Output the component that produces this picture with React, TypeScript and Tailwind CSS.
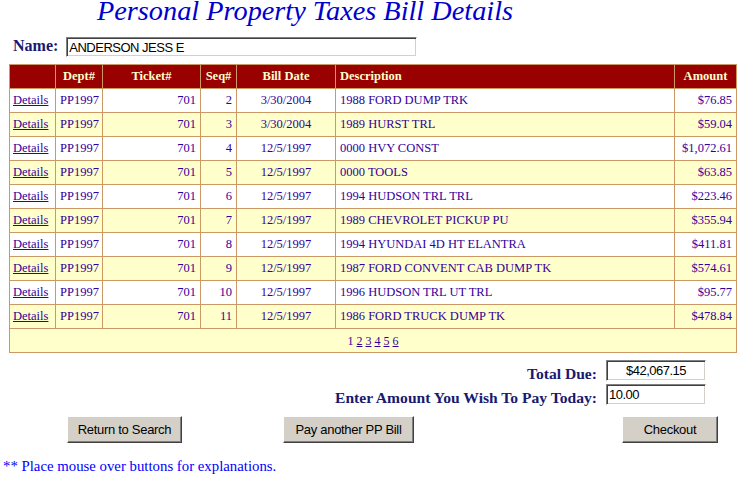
import React from 'react';

interface Bill {
    seq: number;
    date: string;
    description: string;
    amount: string;
}

const BILLS: Bill[] = [
    { seq: 2, date: '3/30/2004', description: '1988 FORD DUMP TRK', amount: '$76.85' },
    { seq: 3, date: '3/30/2004', description: '1989 HURST TRL', amount: '$59.04' },
    { seq: 4, date: '12/5/1997', description: '0000 HVY CONST', amount: '$1,072.61' },
    { seq: 5, date: '12/5/1997', description: '0000 TOOLS', amount: '$63.85' },
    { seq: 6, date: '12/5/1997', description: '1994 HUDSON TRL TRL', amount: '$223.46' },
    { seq: 7, date: '12/5/1997', description: '1989 CHEVROLET PICKUP PU', amount: '$355.94' },
    { seq: 8, date: '12/5/1997', description: '1994 HYUNDAI 4D HT ELANTRA', amount: '$411.81' },
    { seq: 9, date: '12/5/1997', description: '1987 FORD CONVENT CAB DUMP TK', amount: '$574.61' },
    { seq: 10, date: '12/5/1997', description: '1996 HUDSON TRL UT TRL', amount: '$95.77' },
    { seq: 11, date: '12/5/1997', description: '1986 FORD TRUCK DUMP TK', amount: '$478.84' },
];

const serif = "font-['Liberation_Serif','Times_New_Roman',serif]";
const sans = "font-['Liberation_Sans',Arial,sans-serif]";

// classic sunken text box
const fieldClass =
    "h-[21px] w-[100px] border border-t-[#808080] border-l-[#808080] border-b-white border-r-white bg-white px-[2px] text-[13px] tracking-[-0.5px] text-black outline-none shadow-[inset_1px_1px_0_#404040,inset_-1px_-1px_0_#d4d0c8] " +
    sans;

const buttonClass =
    "h-[27px] border border-t-white border-l-white border-b-[#404040] border-r-[#404040] bg-[#d4d0c8] text-[13px] tracking-[-0.3px] text-black shadow-[inset_-1px_-1px_0_#808080] " +
    sans;

const cell = 'border border-[#cc9966] px-[4px] py-0 whitespace-nowrap';

export default function App() {
    return (
        <div className={`w-[747px] h-[479px] bg-white overflow-hidden ${serif}`}>
            <div className="flex h-[30px] items-start pl-[97px]">
                <h1 className="text-[28.3px] leading-[21px] italic font-normal text-[#0000cc]">
                    Personal Property Taxes Bill Details
                </h1>
            </div>

            <div className="mt-[7px] flex items-start">
                <span className="ml-[13px] text-[16px] leading-[16px] pt-[1px] font-bold text-[#191970]">Name:</span>
                <input
                    readOnly
                    defaultValue="ANDERSON JESS E"
                    className={fieldClass + ' ml-[8px] !w-[351px] !h-[20px]'}
                />
            </div>

            <table className="mt-[7px] ml-[9px] w-[728px] table-fixed border-collapse border border-[#cc9966] text-[12.5px] text-[#330099]">
                <colgroup>
                    <col className="w-[46px]" />
                    <col className="w-[47px]" />
                    <col className="w-[98px]" />
                    <col className="w-[36px]" />
                    <col className="w-[99px]" />
                    <col className="w-[339px]" />
                    <col className="w-[62px]" />
                </colgroup>
                <thead>
                    <tr className="h-[24px] bg-[#990000] text-[#ffffcc] font-bold">
                        <th className={cell}></th>
                        <th className={cell + ' text-center'}>Dept#</th>
                        <th className={cell + ' text-center'}>Ticket#</th>
                        <th className={cell + ' text-center'}>Seq#</th>
                        <th className={cell + ' text-center'}>Bill Date</th>
                        <th className={cell + ' text-left'}>Description</th>
                        <th className={cell + ' text-center'}>Amount</th>
                    </tr>
                </thead>
                <tbody>
                    {BILLS.map((b, i) => (
                        <tr key={b.seq} className={`h-[24px] ${i % 2 === 0 ? 'bg-white' : 'bg-[#ffffcc]'}`}>
                            <td className={cell + ' !px-[3px]'}>
                                <a href="#" className="underline text-[#330099]">Details</a>
                            </td>
                            <td className={cell}>PP1997</td>
                            <td className={cell + ' text-right'}>701</td>
                            <td className={cell + ' text-right'}>{b.seq}</td>
                            <td className={cell + ' text-center'}>{b.date}</td>
                            <td className={cell}>{b.description}</td>
                            <td className={cell + ' text-right'}>{b.amount}</td>
                        </tr>
                    ))}
                    <tr className="h-[24px] bg-[#ffffcc]">
                        <td colSpan={7} className={cell + ' text-center text-[12px]'}>
                            1{' '}
                            {[2, 3, 4, 5, 6].map((n) => (
                                <React.Fragment key={n}>
                                    <a href="#" className="underline">{n}</a>
                                    {n < 6 ? ' ' : ''}
                                </React.Fragment>
                            ))}
                        </td>
                    </tr>
                </tbody>
            </table>

            <div className="mt-[7px] flex flex-col items-end pr-[41px] gap-[3px]">
                <div className="flex items-end gap-[9px]">
                    <span className="text-[15.6px] leading-[15px] font-bold text-[#191970]">Total Due:</span>
                    <input readOnly defaultValue="$42,067.15" className={fieldClass + ' text-center'} />
                </div>
                <div className="flex items-end gap-[9px]">
                    <span className="text-[15.6px] leading-[15px] font-bold text-[#191970]">
                        Enter Amount You Wish To Pay Today:
                    </span>
                    <input readOnly defaultValue="10.00" className={fieldClass} />
                </div>
            </div>

            <div className="mt-[11px] flex">
                <button className={buttonClass + ' ml-[67px] w-[115px]'}>Return to Search</button>
                <button className={buttonClass + ' ml-[101px] w-[131px]'}>Pay another PP Bill</button>
                <button className={buttonClass + ' ml-[208px] w-[96px]'}>Checkout</button>
            </div>

            <p className="mt-[15px] ml-[3px] text-[14.8px] leading-[17px] text-[#0000ff]">
                ** Place mouse over buttons for explanations.
            </p>
        </div>
    );
}
